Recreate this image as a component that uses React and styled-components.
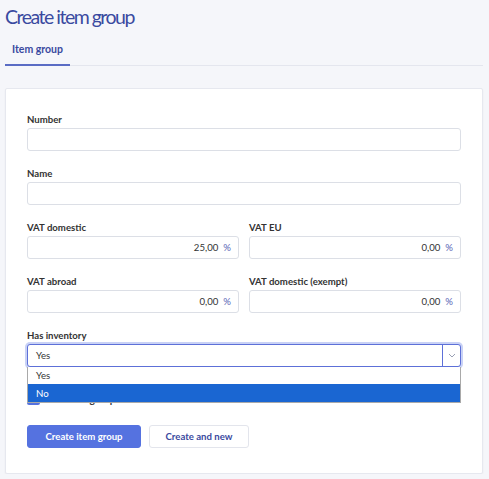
import React from 'react';
import styled, { createGlobalStyle } from 'styled-components';

const GlobalStyle = createGlobalStyle`
  body {
    margin: 0;
    background: #f5f6fa;
    font-family: Lato, "Open Sans", sans-serif;
    color: #333;
  }
`;

const Page = styled.div`
  padding: 4px 6px 0 5px;
`;

const Title = styled.h1`
  margin: 0;
  font-size: 19.5px;
  font-weight: 400;
  letter-spacing: -1.5px;
  color: #3a4aa0;
  line-height: 26px;
`;

const Tabs = styled.div`
  display: flex;
  margin-top: 13px;
  border-bottom: 1px solid #e4e6ee;
`;

const Tab = styled.div`
  padding: 0 7px 9px;
  font-size: 10.5px;
  font-weight: 700;
  color: #3a4aa0;
  border-bottom: 2px solid #5a6cc4;
  margin-bottom: -1px;
`;

const Card = styled.div`
  margin-top: 22px;
  background: #fff;
  border: 1px solid #e6e8ef;
  border-radius: 2px;
  box-shadow: 0 1px 2px rgba(0, 0, 0, 0.05);
  padding: 24px 21px 25px 21px;
`;

const Form = styled.div`
  display: flex;
  flex-direction: column;
  gap: 16px;
`;

const Row = styled.div`
  display: grid;
  grid-template-columns: 1fr 1fr;
  gap: 10px;
`;

const Field = styled.div`
  display: flex;
  flex-direction: column;
  position: relative;
`;

const Label = styled.label`
  font-size: 9.6px;
  font-weight: 700;
  line-height: 14px;
  margin-bottom: 1px;
  color: #333;
`;

const Input = styled.div`
  height: 23px;
  box-sizing: border-box;
  border: 1px solid #dcdfe6;
  border-radius: 3px;
  background: #fff;
  display: flex;
  align-items: center;
  justify-content: ${p => (p.$right ? 'flex-end' : 'flex-start')};
  padding: 0 7px 0 8px;
  font-size: 9.6px;
  color: #333;
`;

const Unit = styled.span`
  color: #5764b5;
  margin-left: 5px;
`;

const Select = styled.div`
  height: 23px;
  box-sizing: border-box;
  border: 1px solid #5d70d8;
  border-radius: 3px;
  box-shadow: 0 0 0 2px #c9d2f6;
  background: #fff;
  display: flex;
  align-items: stretch;
  font-size: 9.6px;
  color: #333;
`;

const SelectValue = styled.div`
  flex: 1;
  display: flex;
  align-items: center;
  padding-left: 8px;
`;

const Chevron = styled.div`
  width: 17px;
  border-left: 1px solid #5d70d8;
  display: flex;
  align-items: center;
  justify-content: center;
`;

const Menu = styled.div`
  position: absolute;
  left: 0;
  right: 0;
  top: 38px;
  background: #fff;
  border: 1px solid #a9a9a9;
  border-top: none;
  z-index: 2;
  font-size: 9.6px;
`;

const Option = styled.div`
  height: ${p => (p.$active ? 18 : 17)}px;
  display: flex;
  align-items: center;
  padding-left: 8px;
  background: ${p => (p.$active ? '#1a66d2' : '#fff')};
  color: ${p => (p.$active ? '#fff' : '#333')};
`;

const CheckRow = styled.div`
  display: flex;
  align-items: flex-end;
  gap: 6px;
  height: 22px;
  font-size: 10px;
  font-weight: 700;
`;

const Box = styled.span`
  width: 13px;
  height: 13px;
  border-radius: 2px;
  background: #5572e0;
`;

const Buttons = styled.div`
  display: flex;
  gap: 8px;
  margin-top: 4px;
`;

const Button = styled.button`
  height: 23px;
  padding: 0 ${p => (p.$primary ? 17.5 : 15.5)}px;
  border-radius: 3px;
  font-family: inherit;
  font-size: 9.6px;
  font-weight: 700;
  cursor: pointer;
  border: 1px solid ${p => (p.$primary ? '#5572e0' : '#e3e5ec')};
  background: ${p => (p.$primary ? '#5572e0' : '#fff')};
  color: ${p => (p.$primary ? '#fff' : '#3a4aa0')};
`;

const Percent = ({ value }) => (
  <Input $right>
    {value}
    <Unit>%</Unit>
  </Input>
);

export default function App() {
  return (
    <Page>
      <GlobalStyle />
      <Title>Create item group</Title>
      <Tabs>
        <Tab>Item group</Tab>
      </Tabs>
      <Card>
        <Form>
          <Field>
            <Label>Number</Label>
            <Input />
          </Field>
          <Field>
            <Label>Name</Label>
            <Input />
          </Field>
          <Row>
            <Field>
              <Label>VAT domestic</Label>
              <Percent value="25,00" />
            </Field>
            <Field>
              <Label>VAT EU</Label>
              <Percent value="0,00" />
            </Field>
          </Row>
          <Row>
            <Field>
              <Label>VAT abroad</Label>
              <Percent value="0,00" />
            </Field>
            <Field>
              <Label>VAT domestic (exempt)</Label>
              <Percent value="0,00" />
            </Field>
          </Row>
          <Field>
            <Label>Has inventory</Label>
            <Select>
              <SelectValue>Yes</SelectValue>
              <Chevron>
                <svg width="8" height="5" viewBox="0 0 8 5">
                  <path d="M1 1l3 3 3-3" fill="none" stroke="#9aa0b4" strokeWidth="1" />
                </svg>
              </Chevron>
            </Select>
            <Menu>
              <Option>Yes</Option>
              <Option $active>No</Option>
            </Menu>
          </Field>
          <CheckRow>
            <Box />
            Is default group
          </CheckRow>
          <Buttons>
            <Button $primary>Create item group</Button>
            <Button>Create and new</Button>
          </Buttons>
        </Form>
      </Card>
    </Page>
  );
}
